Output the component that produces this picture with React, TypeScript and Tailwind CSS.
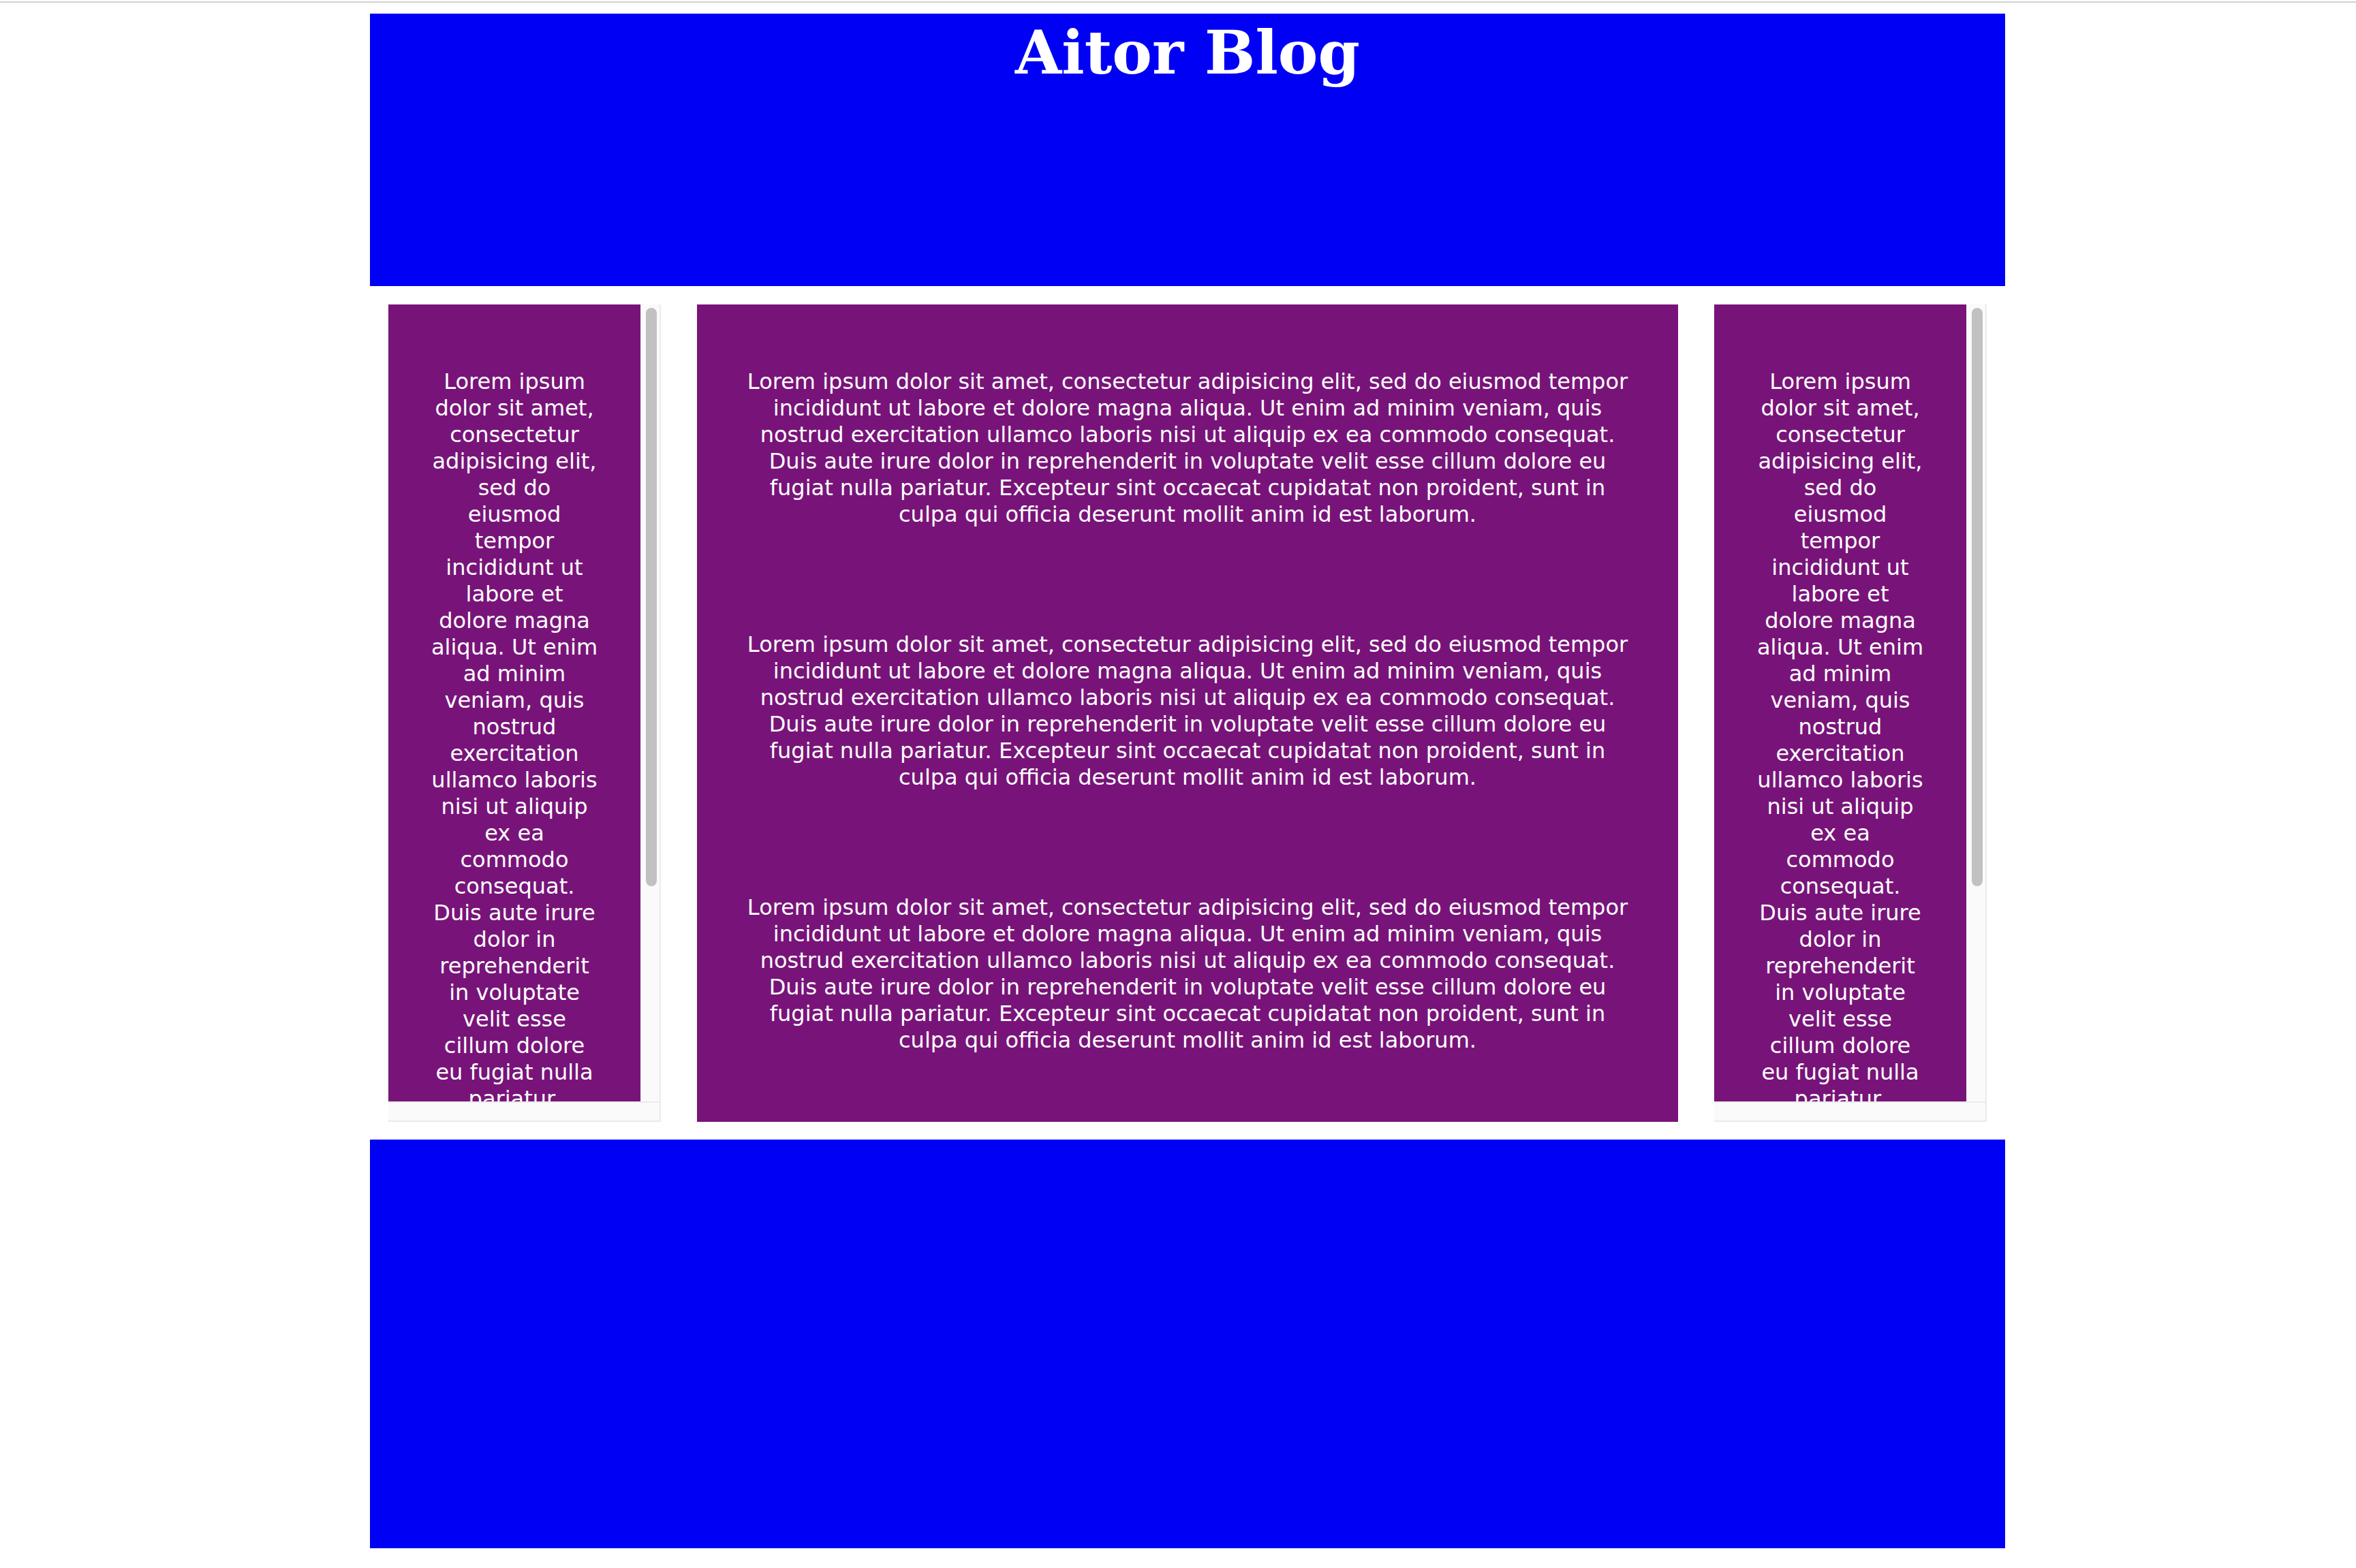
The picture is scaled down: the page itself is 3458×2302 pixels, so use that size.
const SIDE_LINES = [
  "Lorem ipsum",
  "dolor sit amet,",
  "consectetur",
  "adipisicing elit,",
  "sed do",
  "eiusmod",
  "tempor",
  "incididunt ut",
  "labore et",
  "dolore magna",
  "aliqua. Ut enim",
  "ad minim",
  "veniam, quis",
  "nostrud",
  "exercitation",
  "ullamco laboris",
  "nisi ut aliquip",
  "ex ea",
  "commodo",
  "consequat.",
  "Duis aute irure",
  "dolor in",
  "reprehenderit",
  "in voluptate",
  "velit esse",
  "cillum dolore",
  "eu fugiat nulla",
  "pariatur.",
];

const MAIN_LINES = [
  "Lorem ipsum dolor sit amet, consectetur adipisicing elit, sed do eiusmod tempor",
  "incididunt ut labore et dolore magna aliqua. Ut enim ad minim veniam, quis",
  "nostrud exercitation ullamco laboris nisi ut aliquip ex ea commodo consequat.",
  "Duis aute irure dolor in reprehenderit in voluptate velit esse cillum dolore eu",
  "fugiat nulla pariatur. Excepteur sint occaecat cupidatat non proident, sunt in",
  "culpa qui officia deserunt mollit anim id est laborum.",
];

function Sidebar() {
  return (
    <aside className="flex h-full w-[400px] shrink-0 flex-col border-r-2 border-b-2 border-[#ebebeb] bg-[#fafafa]">
      <div className="flex h-[1170px]">
        <div className="w-[370px] overflow-hidden bg-[#781479]">
          <p className="my-[32px] px-[50px] pt-[62px] pb-[60px] text-center text-[32px] leading-[39px] text-white">
            {SIDE_LINES.map((line, i) => (
              <span key={i} className="block whitespace-nowrap">
                {line}
              </span>
            ))}
          </p>
        </div>
        <div className="w-[28px] border-l border-[#ededed] pt-[5px] pl-[7px]">
          <div className="h-[849px] w-[16px] rounded-full bg-[#c1c1c1]" />
        </div>
      </div>
      <div className="flex-1 border-t-2 border-[#ebebeb]" />
    </aside>
  );
}

export default function App() {
  return (
    <div className="min-h-screen bg-white font-['DejaVu_Sans',Verdana,sans-serif]">
      <div className="mt-[2px] h-[2px] bg-[#d1d1d1]" />
      <div className="mt-[16px] ml-[543px] w-[2400px]">
        <header className="h-[400px] bg-[#0000f5] pt-[13px] text-center">
          <h1 className="font-['DejaVu_Serif',Georgia,serif] text-[88px] font-bold leading-none text-white">
            Aitor Blog
          </h1>
        </header>

        <main className="mt-[27px] flex h-[1200px] gap-[53px] px-[27px]">
          <Sidebar />
          <section className="w-[1440px] shrink-0 bg-[#781479]">
            {[0, 1, 2].map((n) => (
              <p
                key={n}
                className="my-[32px] px-[30px] pt-[62px] pb-[58px] text-center text-[32px] leading-[39px] text-white"
              >
                {MAIN_LINES.map((line, i) => (
                  <span key={i} className="block whitespace-nowrap">
                    {line}
                  </span>
                ))}
              </p>
            ))}
          </section>
          <Sidebar />
        </main>

        <footer className="mt-[26px] h-[600px] bg-[#0000f5]" />
      </div>
    </div>
  );
}
